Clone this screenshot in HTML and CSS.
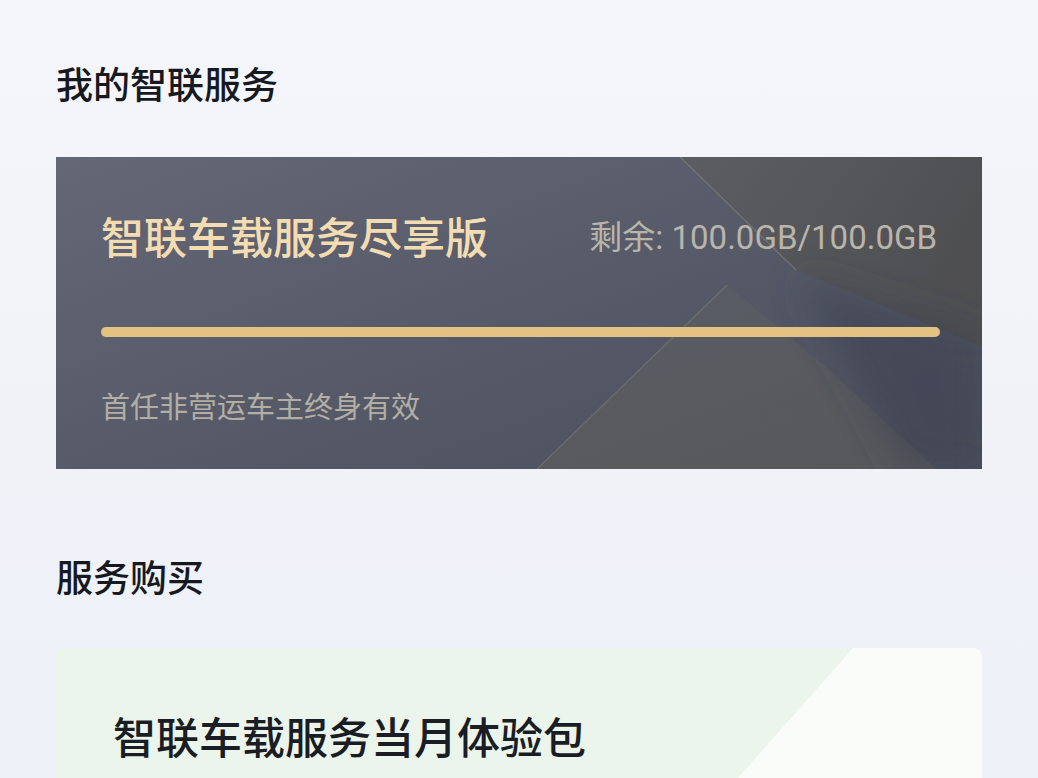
FILE: index.html
```html
<!DOCTYPE html>
<html lang="zh-CN">
<head>
    <meta charset="UTF-8">
    <meta name="viewport" content="width=device-width, initial-scale=1.0">
    <title>我的智联服务</title>
    <link rel="stylesheet" href="styles.css">
</head>
<body>
    <div class="page">
        <h2 class="section-title">我的智联服务</h2>

        <div class="plan-card">
            <svg class="plan-deco" viewBox="0 0 926 312" preserveAspectRatio="none">
                <defs>
                    <linearGradient id="warm" x1="0" y1="0" x2="1" y2="0.3">
                        <stop offset="0" stop-color="#5c5c5c" stop-opacity="0.55"/>
                        <stop offset="1" stop-color="#4e4e4f" stop-opacity="0.9"/>
                    </linearGradient>
                    <linearGradient id="peak" x1="0" y1="0" x2="0.4" y2="1">
                        <stop offset="0" stop-color="#66665f" stop-opacity="0.2"/>
                        <stop offset="1" stop-color="#5e5e5b" stop-opacity="0.6"/>
                    </linearGradient>
                    <filter id="soft" x="-30%" y="-30%" width="160%" height="160%">
                        <feGaussianBlur stdDeviation="18"/>
                    </filter>
                    <filter id="edge" x="-10%" y="-10%" width="120%" height="120%">
                        <feGaussianBlur stdDeviation="6"/>
                    </filter>
                </defs>
                <polygon points="624,0 926,0 926,190 740,113" fill="url(#warm)"/>
                <polygon points="481,312 671,128 770,210 880,312" fill="url(#peak)"/>
                <polygon points="740,120 926,180 926,312 850,312 800,220" fill="#3f4351" fill-opacity="0.65" filter="url(#soft)"/>
                <line x1="624" y1="0" x2="740" y2="113" stroke="#8c8b86" stroke-opacity="0.45" stroke-width="1.5"/>
                <line x1="481" y1="312" x2="671" y2="128" stroke="#8e8c84" stroke-opacity="0.35" stroke-width="1.5"/>
            </svg>
            <div class="plan-head">
                <span class="plan-name">智联车载服务尽享版</span>
                <span class="plan-left">剩余: 100.0GB/100.0GB</span>
            </div>
            <div class="plan-bar"><div class="plan-bar-fill" style="width: 100%;"></div></div>
            <p class="plan-note">首任非营运车主终身有效</p>
        </div>

        <h2 class="section-title buy-title">服务购买</h2>

        <div class="offer-card">
            <svg class="offer-deco" viewBox="0 0 926 200" preserveAspectRatio="none">
                <path d="M797,0 L918,0 Q926,0 926,8 L926,200 L620,200 Z" fill="#f9fcf9"/>
            </svg>
            <p class="offer-name">智联车载服务当月体验包</p>
        </div>
    </div>
</body>
</html>
```

FILE: styles.css
```css
html, body {
    margin: 0;
    height: 100%;
}
body {
    font-family: "Noto Sans CJK SC", "Noto Sans", sans-serif;
    background: linear-gradient(180deg, #f5f6fa 0%, #f0f2f8 60%, #eef1f8 100%);
    overflow: hidden;
}
.page {
    padding: 0 56px;
}
.section-title {
    margin: 0;
    padding-top: 60px;
    font-size: 37px;
    line-height: 46px;
    font-weight: 500;
    color: #16191f;
}
.plan-card {
    position: relative;
    margin-top: 51px;
    height: 312px;
    padding: 0 42px 0 45px;
    box-sizing: border-box;
    overflow: hidden;
    background: linear-gradient(160deg, #646876 0%, #585c6a 45%, #4a4e5b 100%);
}
.plan-deco {
    position: absolute;
    left: 0;
    top: 0;
    width: 100%;
    height: 100%;
}
.plan-head {
    position: relative;
    display: flex;
    justify-content: space-between;
    align-items: center;
    padding-top: 49px;
    height: 58px;
}
.plan-name {
    font-size: 43px;
    font-weight: 500;
    color: #f4dcb2;
}
.plan-left {
    font-family: Roboto, "Noto Sans CJK SC", sans-serif;
    font-size: 33px;
    color: #bab5ab;
    padding-right: 3px;
}
.plan-bar {
    position: relative;
    margin-top: 63px;
    height: 10px;
    border-radius: 5px;
    background: rgba(255, 255, 255, 0.15);
}
.plan-bar-fill {
    height: 100%;
    border-radius: 5px;
    background: #e4c282;
}
.plan-note {
    position: relative;
    margin: 48px 0 0;
    font-size: 29px;
    line-height: 40px;
    color: #b3aea4;
}
.buy-title {
    padding-top: 84px;
}
.offer-card {
    position: relative;
    margin-top: 49px;
    height: 260px;
    border-radius: 8px;
    overflow: hidden;
    background: #ebf5ec;
    padding: 59px 57px;
    box-sizing: border-box;
}
.offer-deco {
    position: absolute;
    left: 0;
    top: 0;
    width: 100%;
    height: 200px;
}
.offer-name {
    position: relative;
    margin: 0;
    font-size: 43px;
    line-height: 56px;
    font-weight: 500;
    color: #1a1d24;
}
```
